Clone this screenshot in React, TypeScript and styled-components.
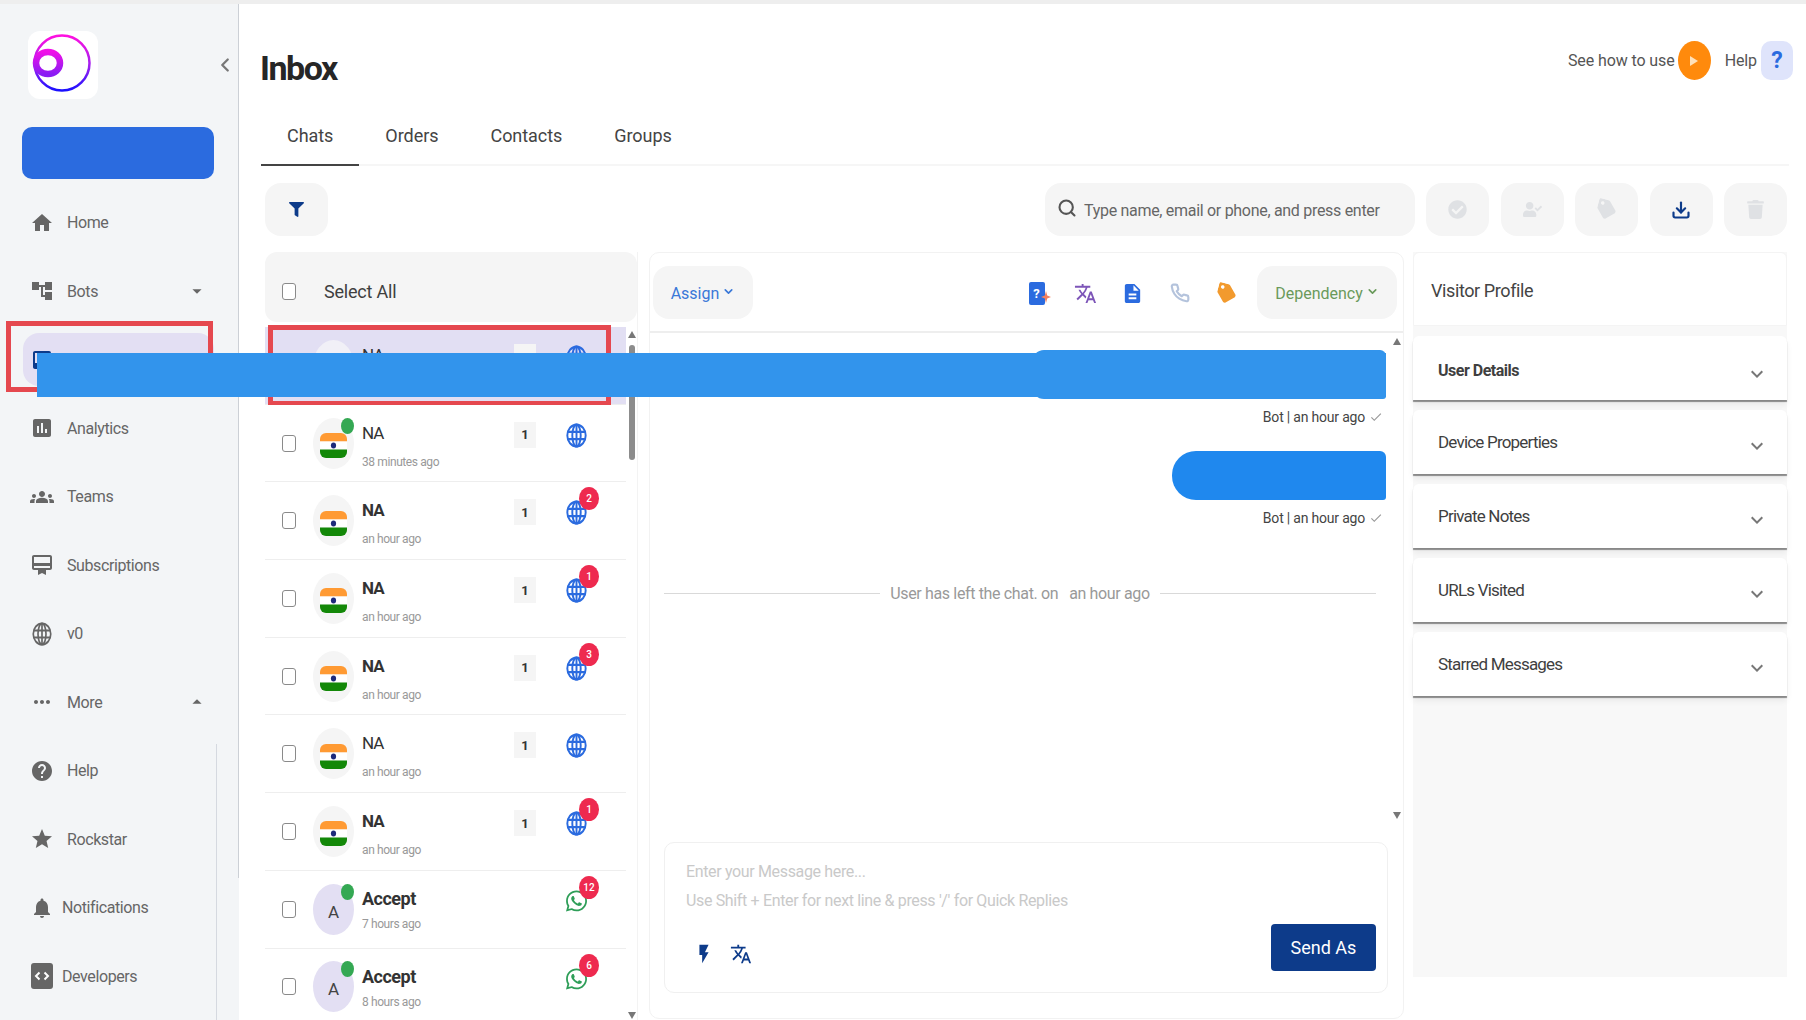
import React, { FC } from "react";
import styled, { createGlobalStyle } from "styled-components";
import {
  MdHome, MdAccountTree, MdInbox, MdAssessment, MdGroups, MdCardMembership, MdMoreHoriz,
  MdHelp, MdStar, MdNotifications, MdArrowDropDown, MdArrowDropUp, MdTranslate, MdDescription,
  MdFlashOn, MdKeyboardArrowDown, MdCheck,
} from "react-icons/md";
import { FaCheckCircle, FaFilter, FaTag, FaTrash, FaUserCheck, FaWhatsapp } from "react-icons/fa";
import { LuChevronLeft, LuChevronDown, LuDownload, LuPhone, LuSearch } from "react-icons/lu";

const GlobalStyle = createGlobalStyle`
  * { box-sizing: border-box; }
  html, body { margin: 0; padding: 0; background: #fff; }
  body { font-family: Roboto, "Liberation Sans", sans-serif; color: #3a3a3a; overflow: hidden; }
`;

const Page = styled.div`
  position: relative;
  display: flex;
  width: 1806px;
  height: 1020px;
  overflow: hidden;
  border-top: 4px solid #eeeeee;
`;

const Sidebar = styled.aside`
  width: 239px;
  flex: none;
  background: #f3f5f7;
  border-right: 1px solid #ccd0d6;
  border-image: linear-gradient(#ccd0d6 873px, transparent 873px) 1;
`;

const SidebarTop = styled.div`
  display: flex;
  align-items: center;
  padding: 27px 2px 0 28px;
  color: #777;
`;

const LogoBox = styled.div`
  width: 70px;
  height: 68px;
  background: #fff;
  border-radius: 12px;
  margin-right: auto;
`;

const BlueButton = styled.div`
  width: 192px;
  height: 52px;
  margin: 28px 0 17px 22px;
  background: #2b6bdf;
  border-radius: 10px;
`;

const Nav = styled.nav`
  width: 194px;
  margin-left: 23px;
`;

const NavGroup = styled.div`
  border-right: 1px solid #d5d9e0;
  padding-bottom: 30px;
`;

const NavItem = styled.div<{ $active?: boolean }>`
  position: relative;
  display: flex;
  align-items: center;
  width: 191px;
  height: 53px;
  margin-bottom: 15.5px;
  padding: 0 6px;
  border-radius: 16px;
  background: ${({ $active }) => ($active ? "#e3dff3" : "transparent")};
  color: ${({ $active }) => ($active ? "#0d3b8a" : "#666")};
  font-size: 16px;
  letter-spacing: -0.4px;
`;

const NavIcon = styled.span`
  display: flex;
  justify-content: center;
  width: 26px;
  font-size: 24px;
  flex: none;
`;

const NavLabel = styled.span<{ $near?: boolean }>`
  margin-left: ${({ $near }) => ($near ? "7px" : "12px")};
`;

const NavCaret = styled.span`
  display: flex;
  margin-left: auto;
  font-size: 22px;
`;

const NoteBox = styled.div`
  position: absolute;
  border: 5px solid #e5484f;
  pointer-events: none;
`;

const NavNote = styled(NoteBox)`
  left: -17px;
  top: -12px;
  width: 207px;
  height: 71px;
`;

const Main = styled.main`
  flex: 1;
  min-width: 0;
  display: flex;
  flex-direction: column;
  padding: 0 17px 0 22px;
`;

const Header = styled.header`
  display: flex;
  align-items: flex-start;
  justify-content: space-between;
  height: 104px;
`;

const Title = styled.h1`
  margin: 42px 0 0 -1px;
  font-size: 34px;
  line-height: 44px;
  font-weight: 700;
  color: #262626;
  letter-spacing: -1.5px;
`;

const HelpRow = styled.div`
  display: flex;
  align-items: center;
  margin: 37px -2px 0 0;
  font-size: 16px;
  letter-spacing: -0.1px;
  color: #555;
`;

const PlayButton = styled.span`
  display: flex;
  align-items: center;
  justify-content: center;
  width: 33px;
  height: 39px;
  margin: 0 14px 0 3px;
  border-radius: 50%;
  background: #ff8a0c;
`;

const QuestionButton = styled.span`
  display: flex;
  align-items: center;
  justify-content: center;
  width: 32px;
  height: 39px;
  margin: 0 -2px 0 4px;
  border-radius: 10px;
  background: #dfe4fb;
  color: #2b6bdf;
  font-size: 23px;
  font-weight: 700;
`;

const Tabs = styled.div`
  display: flex;
  height: 58px;
  border-bottom: 2px solid #f6f6f6;
`;

const Tab = styled.div<{ $active?: boolean }>`
  display: flex;
  align-items: center;
  height: 58px;
  padding: 0 26px 2px;
  font-size: 18px;
  letter-spacing: -0.05px;
  color: #444;
  border-bottom: 2px solid ${({ $active }) => ($active ? "#444" : "transparent")};
`;

const Toolbar = styled.div`
  display: flex;
  align-items: stretch;
  height: 53px;
  margin: 17px 2px 0 4px;
`;

const SoftButton = styled.div<{ $disabled?: boolean }>`
  display: flex;
  align-items: center;
  justify-content: center;
  width: 63px;
  border-radius: 16px;
  background: #f5f5f5;
  color: ${({ $disabled }) => ($disabled ? "#dfe1e4" : "#0d3b8a")};
  font-size: 19px;
`;

const SearchBox = styled.div`
  display: flex;
  align-items: center;
  width: 370px;
  margin: 0 11px 0 auto;
  padding: 2px 12px 0;
  border-radius: 16px;
  background: #f5f5f5;
  color: #666;
  font-size: 16px;
  letter-spacing: -0.3px;
  gap: 7px;
`;

const SearchIcon = styled.span`
  display: flex;
  margin-top: -6px;
  color: #555;
`;

const ActionRow = styled.div`
  display: flex;
  gap: 11.5px;
`;

const TagGlyph = styled(FaTag)`
  transform: rotate(15deg);
`;

const Columns = styled.div`
  flex: 1;
  min-height: 0;
  display: flex;
  margin: 16px 3px 0 4px;
`;

const ListPanel = styled.section`
  position: relative;
  width: 373px;
  flex: none;
  display: flex;
  flex-direction: column;
  overflow: hidden;
  border-right: 1px solid #f3f3f3;
`;

const ListHead = styled.div`
  display: flex;
  align-items: center;
  height: 70px;
  flex: none;
  margin-bottom: 5px;
  padding: 8px 0 0 17px;
  background: #f5f5f5;
  border-radius: 12px;
  font-size: 18px;
  letter-spacing: -0.2px;
`;

const CheckBox = styled.span`
  display: block;
  width: 14px;
  height: 17px;
  flex: none;
  border: 1.5px solid #8a8a8a;
  border-radius: 3px;
  background: #fff;
`;

const SelectLabel = styled.span`
  margin-left: 28px;
  color: #3f3f3f;
`;

const Row = styled.div<{ $active?: boolean }>`
  position: relative;
  display: flex;
  align-items: center;
  width: 361px;
  height: 77.7px;
  flex: none;
  padding: 0 39px 0 17px;
  background: ${({ $active }) => ($active ? "#e2dff3" : "#fff")};
  border-bottom: 1px solid #eeeeee;
`;

const RowNote = styled(NoteBox)`
  left: 3px;
  top: -2px;
  width: 343px;
  height: 81px;
`;

const Avatar = styled.div<{ $letter?: boolean; $active?: boolean }>`
  position: relative;
  display: flex;
  align-items: center;
  justify-content: center;
  width: 41px;
  height: 51px;
  flex: none;
  margin-left: 17px;
  border-radius: 50%;
  background: ${({ $letter, $active }) => ($letter ? "#e3dff3" : $active ? "#f1f0f7" : "#f5f5f5")};
  font-size: 17px;
  color: #444;
  padding-top: 5px;
`;

const OnlineDot = styled.span`
  position: absolute;
  top: 0;
  right: 0;
  width: 13px;
  height: 16px;
  border-radius: 50%;
  background: #34a853;
`;

const RowText = styled.div`
  flex: 1;
  min-width: 0;
  align-self: stretch;
  margin-left: 8px;
  padding-top: 17px;
`;

const Name = styled.div<{ $bold?: boolean; $large?: boolean }>`
  font-size: ${({ $large }) => ($large ? "18px" : "17px")};
  line-height: 22px;
  letter-spacing: ${({ $large }) => ($large ? "-0.5px" : "-1px")};
  font-weight: ${({ $bold }) => ($bold ? 700 : 400)};
  color: #333;
`;

const TimeAgo = styled.div<{ $tight?: boolean }>`
  margin-top: ${({ $tight }) => ($tight ? "6px" : "10px")};
  font-size: 12px;
  line-height: 16px;
  letter-spacing: -0.4px;
  color: #999;
`;

const CountChip = styled.span`
  display: flex;
  align-items: center;
  justify-content: center;
  align-self: flex-start;
  width: 22px;
  height: 26px;
  margin-top: 17px;
  background: #f5f5f5;
  font-size: 13px;
  font-weight: 700;
  color: #333;
`;

const ChannelIcon = styled.span`
  position: relative;
  display: flex;
  align-self: flex-start;
  width: 21px;
  height: 25px;
  margin: 18px 0 0 30px;
`;

const Badge = styled.span`
  position: absolute;
  left: 13px;
  top: -13px;
  display: flex;
  align-items: center;
  justify-content: center;
  width: 20px;
  height: 23px;
  border-radius: 50%;
  background: #ee2a4f;
  color: #fff;
  font-size: 10px;
  font-weight: 500;
`;

const ScrollArrow = styled.span<{ $down?: boolean; $x: number; $y: number }>`
  position: absolute;
  left: ${({ $x }) => $x}px;
  top: ${({ $y }) => $y}px;
  width: 0;
  height: 0;
  border-left: 4px solid transparent;
  border-right: 4px solid transparent;
  ${({ $down }) => ($down ? "border-top: 7px solid #777;" : "border-bottom: 7px solid #777;")}
`;

const ScrollThumb = styled.span`
  position: absolute;
  left: 364px;
  top: 93px;
  width: 6px;
  height: 115px;
  border-radius: 3px;
  background: #8c8c8c;
`;

const ChatPanel = styled.section`
  position: relative;
  width: 755px;
  flex: none;
  height: 767px;
  margin-left: 11px;
  display: flex;
  flex-direction: column;
  border: 1px solid #f2f2f2;
  border-radius: 10px;
`;

const ChatHead = styled.div`
  display: flex;
  align-items: center;
  height: 80px;
  flex: none;
  padding: 0 6px 0 3px;
  border-bottom: 2px solid #eeeeee;
`;

const PillButton = styled.div<{ $green?: boolean }>`
  display: flex;
  align-items: center;
  justify-content: center;
  gap: 4px;
  height: 53px;
  width: ${({ $green }) => ($green ? "140px" : "100px")};
  padding-top: 2px;
  border-radius: 16px;
  background: #f5f5f5;
  color: ${({ $green }) => ($green ? "#6a9a5b" : "#3a78d8")};
  font-size: 16px;
`;

const PillChevron = styled(LuChevronDown)`
  margin: -4px 0 0 -1px;
`;

const ToolIcons = styled.div`
  display: flex;
  margin: 2px 7px 0 auto;
`;

const ToolIcon = styled.span<{ $color: string }>`
  position: relative;
  display: flex;
  align-items: center;
  justify-content: center;
  width: 47px;
  height: 28px;
  color: ${({ $color }) => $color};
  font-size: 23px;
`;

const AskBadge = styled.span`
  display: flex;
  align-items: center;
  justify-content: center;
  width: 16px;
  height: 23px;
  margin-right: 4px;
  border-radius: 2px;
  background: #2b6bdf;
  color: #fff;
  font-size: 13px;
  font-weight: 700;
`;

const Sparkle = styled.svg`
  position: absolute;
  left: 26px;
  top: 12px;
`;

const Messages = styled.div`
  flex: 1;
  min-height: 0;
  display: flex;
  flex-direction: column;
  align-items: flex-end;
  padding: 17px 17px 0 14px;
`;

const Bubble = styled.div<{ $wide?: boolean }>`
  width: ${({ $wide }) => ($wide ? "354px" : "214px")};
  height: 49px;
  border-radius: ${({ $wide }) => ($wide ? "12px 6px 3px 12px" : "24px 6px 3px 24px")};
  background: ${({ $wide }) => ($wide ? "#3294ec" : "#1f88ee")};
`;

const Meta = styled.div`
  display: flex;
  align-items: center;
  gap: 4px;
  height: 20px;
  margin: 8px 3px 24px 0;
  font-size: 14px;
  letter-spacing: -0.2px;
  color: #444;
`;

const MetaCheck = styled.span`
  display: flex;
  color: #999;
  font-size: 14px;
`;

const Divider = styled.div`
  display: flex;
  align-items: center;
  align-self: stretch;
  gap: 10px;
  margin: 32px 10px 0 0;
  color: #999;
  font-size: 16px;
  letter-spacing: -0.35px;
  white-space: pre;
  &::before, &::after {
    content: "";
    flex: 1;
    height: 1.5px;
    background: #d9d9d9;
  }
`;

const Composer = styled.div`
  display: flex;
  flex-direction: column;
  height: 151px;
  flex: none;
  margin: 0 15px 25px 14px;
  padding: 15px 11px 21px 21px;
  border: 1px solid #f0f0f0;
  border-radius: 10px;
  background: #fff;
`;

const Hint = styled.div`
  font-size: 16px;
  line-height: 28.5px;
  letter-spacing: -0.35px;
  color: #c9c9c9;
`;

const ComposerFoot = styled.div`
  display: flex;
  align-items: flex-end;
  margin-top: auto;
`;

const ComposerTools = styled.div`
  display: flex;
  align-items: center;
  gap: 15px;
  margin-bottom: 6px;
  padding-left: 7px;
  color: #0d3b8a;
  font-size: 22px;
`;

const SendButton = styled.button`
  width: 105px;
  height: 47px;
  margin-left: auto;
  border: 0;
  border-radius: 4px;
  background: #0d3b8a;
  color: #fff;
  font-family: inherit;
  font-size: 18px;
`;

const ProfilePanel = styled.section`
  width: 374px;
  flex: none;
  height: 725px;
  margin-left: 9px;
  background: #f8f8f8;
`;

const ProfileHead = styled.div`
  display: flex;
  align-items: center;
  height: 74px;
  padding: 3px 0 0 17px;
  background: #fff;
  border: 1px solid #f4f4f4;
  border-radius: 6px 6px 0 0;
  font-size: 18px;
  letter-spacing: -0.4px;
  color: #444;
`;

const Accordion = styled.div<{ $bold?: boolean }>`
  display: flex;
  align-items: center;
  justify-content: space-between;
  height: 64px;
  margin-top: 10px;
  padding: ${({ $bold }) => ($bold ? "4px" : "0")} 18px 0 25px;
  background: #fff;
  border-radius: 6px 6px 0 0;
  box-shadow: 0 2px 1px rgba(0, 0, 0, 0.42), 0 5px 6px rgba(0, 0, 0, 0.06);
  font-size: ${({ $bold }) => ($bold ? "16px" : "17px")};
  letter-spacing: ${({ $bold }) => ($bold ? "-0.5px" : "-0.8px")};
  font-weight: ${({ $bold }) => ($bold ? 700 : 400)};
  color: #3f3f3f;
`;

const AccordionIcon = styled.span`
  display: flex;
  margin-top: 8px;
  color: #777;
  font-size: 24px;
`;

// the blue strip that blanks out data across the screenshot
const RedactionBar = styled.div`
  position: absolute;
  left: 37px;
  top: 349px;
  width: 1349px;
  height: 44px;
  background: #3294ec;
`;

const LogoMark: FC = () => (
  <svg width="70" height="68" viewBox="0 0 70 68">
    <defs>
      <linearGradient id="ring" x1="0" y1="0" x2="0" y2="1">
        <stop offset="0" stopColor="#ff10e0" />
        <stop offset="0.55" stopColor="#a020f0" />
        <stop offset="1" stopColor="#1a10ff" />
      </linearGradient>
      <linearGradient id="letter" x1="0" y1="0" x2="0" y2="1">
        <stop offset="0" stopColor="#f010e8" />
        <stop offset="1" stopColor="#8a1cf4" />
      </linearGradient>
    </defs>
    <circle cx="34" cy="32" r="27.5" fill="none" stroke="url(#ring)" strokeWidth="2.5" />
    <ellipse cx="20" cy="32" rx="12" ry="11" fill="#fff" stroke="url(#letter)" strokeWidth="6.5" />
  </svg>
);

const GlobeIcon: FC = () => (
  <svg width="21" height="25" viewBox="0 0 24 24" preserveAspectRatio="none" fill="none" stroke="#2b6bdf" strokeWidth="2.2">
    <circle cx="12" cy="12" r="10.5" />
    <ellipse cx="12" cy="12" rx="4.8" ry="10.5" />
    <path d="M2 8.5h20M2 15.5h20M12 1.5v21" />
  </svg>
);

const FlagIcon: FC = () => (
  <svg width="27" height="25" viewBox="0 0 27 25">
    <defs>
      <clipPath id="flagClip">
        <rect width="27" height="25" rx="6" />
      </clipPath>
    </defs>
    <g clipPath="url(#flagClip)">
      <rect width="27" height="8.5" fill="#ff9a33" />
      <rect y="8.5" width="27" height="8" fill="#fff" />
      <rect y="16.5" width="27" height="8.5" fill="#138808" />
      <ellipse cx="13.5" cy="12.5" rx="2.6" ry="3" fill="#1d2a7a" />
    </g>
  </svg>
);

const CodeBoxIcon: FC = () => (
  <svg width="22" height="26" viewBox="0 0 22 26">
    <rect width="22" height="26" rx="3" fill="#666" />
    <path d="M8.5 9.5 5 13l3.5 3.5M13.5 9.5 17 13l-3.5 3.5" fill="none" stroke="#fff" strokeWidth="2" />
  </svg>
);

const NavGlobeIcon: FC = () => (
  <svg width="20" height="24" viewBox="0 0 24 24" preserveAspectRatio="none" fill="none" stroke="#666" strokeWidth="2">
    <circle cx="12" cy="12" r="10.5" />
    <ellipse cx="12" cy="12" rx="4.8" ry="10.5" />
    <path d="M2 8.5h20M2 15.5h20M12 1.5v21" />
  </svg>
);

interface ChatRow {
  name: string;
  time: string;
  bold?: boolean;
  online?: boolean;
  badge?: number;
  whatsapp?: boolean;
  active?: boolean;
}

const rows: ChatRow[] = [
  { name: "NA", time: "38 minutes ago", active: true },
  { name: "NA", time: "38 minutes ago", online: true },
  { name: "NA", time: "an hour ago", bold: true, badge: 2 },
  { name: "NA", time: "an hour ago", bold: true, badge: 1 },
  { name: "NA", time: "an hour ago", bold: true, badge: 3 },
  { name: "NA", time: "an hour ago" },
  { name: "NA", time: "an hour ago", bold: true, badge: 1 },
  { name: "Accept", time: "7 hours ago", bold: true, online: true, badge: 12, whatsapp: true },
  { name: "Accept", time: "8 hours ago", bold: true, online: true, badge: 6, whatsapp: true },
];

const accordions = ["User Details", "Device Properties", "Private Notes", "URLs Visited", "Starred Messages"];

const App: FC = () => {
  return (
    <>
      <GlobalStyle />
      <Page>
        <Sidebar>
          <SidebarTop>
            <LogoBox><LogoMark /></LogoBox>
            <LuChevronLeft size={22} strokeWidth={2.5} />
          </SidebarTop>
          <BlueButton />
          <Nav>
            <NavItem><NavIcon><MdHome /></NavIcon><NavLabel>Home</NavLabel></NavItem>
            <NavItem>
              <NavIcon><MdAccountTree /></NavIcon><NavLabel>Bots</NavLabel>
              <NavCaret><MdArrowDropDown /></NavCaret>
            </NavItem>
            <NavItem $active>
              <NavIcon><MdInbox /></NavIcon><NavLabel>Inbox</NavLabel>
              <NavNote />
            </NavItem>
            <NavItem><NavIcon><MdAssessment /></NavIcon><NavLabel>Analytics</NavLabel></NavItem>
            <NavItem><NavIcon><MdGroups /></NavIcon><NavLabel>Teams</NavLabel></NavItem>
            <NavItem><NavIcon><MdCardMembership /></NavIcon><NavLabel>Subscriptions</NavLabel></NavItem>
            <NavItem><NavIcon><NavGlobeIcon /></NavIcon><NavLabel>v0</NavLabel></NavItem>
            <NavItem>
              <NavIcon><MdMoreHoriz /></NavIcon><NavLabel>More</NavLabel>
              <NavCaret><MdArrowDropUp /></NavCaret>
            </NavItem>
            <NavGroup>
              <NavItem><NavIcon><MdHelp /></NavIcon><NavLabel>Help</NavLabel></NavItem>
              <NavItem><NavIcon><MdStar /></NavIcon><NavLabel>Rockstar</NavLabel></NavItem>
              <NavItem><NavIcon><MdNotifications /></NavIcon><NavLabel $near>Notifications</NavLabel></NavItem>
              <NavItem><NavIcon><CodeBoxIcon /></NavIcon><NavLabel $near>Developers</NavLabel></NavItem>
            </NavGroup>
          </Nav>
        </Sidebar>

        <Main>
          <Header>
            <Title>Inbox</Title>
            <HelpRow>
              See how to use
              <PlayButton>
                <svg width="8" height="10" viewBox="0 0 8 10"><path d="M0 0l8 5-8 5z" fill="#ffe0b8" /></svg>
              </PlayButton>
              Help
              <QuestionButton>?</QuestionButton>
            </HelpRow>
          </Header>

          <Tabs>
            <Tab $active>Chats</Tab>
            <Tab>Orders</Tab>
            <Tab>Contacts</Tab>
            <Tab>Groups</Tab>
          </Tabs>

          <Toolbar>
            <SoftButton><FaFilter size={15} /></SoftButton>
            <SearchBox>
              <SearchIcon><LuSearch size={20} strokeWidth={2.5} /></SearchIcon>
              Type name, email or phone, and press enter
            </SearchBox>
            <ActionRow>
              <SoftButton $disabled><FaCheckCircle /></SoftButton>
              <SoftButton $disabled><FaUserCheck /></SoftButton>
              <SoftButton $disabled><TagGlyph /></SoftButton>
              <SoftButton><LuDownload size={20} strokeWidth={2.6} /></SoftButton>
              <SoftButton $disabled><FaTrash /></SoftButton>
            </ActionRow>
          </Toolbar>

          <Columns>
            <ListPanel>
              <ListHead>
                <CheckBox />
                <SelectLabel>Select All</SelectLabel>
              </ListHead>
              {rows.map((row, i) => (
                <Row key={i} $active={row.active}>
                  <CheckBox />
                  <Avatar $letter={row.whatsapp} $active={row.active}>
                    {row.whatsapp ? "A" : <FlagIcon />}
                    {row.online && <OnlineDot />}
                  </Avatar>
                  <RowText>
                    <Name $bold={row.bold} $large={row.whatsapp}>{row.name}</Name>
                    <TimeAgo $tight={row.whatsapp}>{row.time}</TimeAgo>
                  </RowText>
                  {!row.whatsapp && <CountChip>1</CountChip>}
                  <ChannelIcon>
                    {row.whatsapp ? <FaWhatsapp size={24} color="#2e9e58" /> : <GlobeIcon />}
                    {row.badge && <Badge>{row.badge}</Badge>}
                  </ChannelIcon>
                  {row.active && <RowNote />}
                </Row>
              ))}
              <ScrollArrow $x={363} $y={79} />
              <ScrollThumb />
              <ScrollArrow $down $x={363} $y={760} />
            </ListPanel>

            <ChatPanel>
              <ChatHead>
                <PillButton>Assign <PillChevron size={13} strokeWidth={3} /></PillButton>
                <ToolIcons>
                  <ToolIcon $color="#2b6bdf">
                    <AskBadge>?</AskBadge>
                    <Sparkle width="10" height="12" viewBox="0 0 10 12">
                      <path d="M5 0l1.2 4.6L10 6 6.2 7.4 5 12 3.8 7.4 0 6l3.8-1.4z" fill="#f2815f" />
                    </Sparkle>
                  </ToolIcon>
                  <ToolIcon $color="#7d55b8"><MdTranslate /></ToolIcon>
                  <ToolIcon $color="#2b6bdf"><MdDescription /></ToolIcon>
                  <ToolIcon $color="#b4c3dc"><LuPhone size={20} strokeWidth={2.6} /></ToolIcon>
                  <ToolIcon $color="#f29a2e"><TagGlyph size={19} /></ToolIcon>
                </ToolIcons>
                <PillButton $green>Dependency <PillChevron size={13} strokeWidth={3} /></PillButton>
              </ChatHead>
              <Messages>
                <Bubble $wide />
                <Meta>Bot | an hour ago <MetaCheck><MdCheck /></MetaCheck></Meta>
                <Bubble />
                <Meta>Bot | an hour ago <MetaCheck><MdCheck /></MetaCheck></Meta>
                <Divider>{"User has left the chat. on   an hour ago"}</Divider>
              </Messages>
              <Composer>
                <Hint>Enter your Message here...</Hint>
                <Hint>{"Use Shift + Enter for next line & press '/' for Quick Replies"}</Hint>
                <ComposerFoot>
                  <ComposerTools>
                    <MdFlashOn />
                    <MdTranslate />
                  </ComposerTools>
                  <SendButton>Send As</SendButton>
                </ComposerFoot>
              </Composer>
              <ScrollArrow $x={743} $y={85} />
              <ScrollArrow $down $x={743} $y={559} />
            </ChatPanel>

            <ProfilePanel>
              <ProfileHead>Visitor Profile</ProfileHead>
              {accordions.map((label, i) => (
                <Accordion key={label} $bold={i === 0}>
                  {label}
                  <AccordionIcon><MdKeyboardArrowDown /></AccordionIcon>
                </Accordion>
              ))}
            </ProfilePanel>
          </Columns>
        </Main>
        <RedactionBar />
      </Page>
    </>
  );
};

export default App;
